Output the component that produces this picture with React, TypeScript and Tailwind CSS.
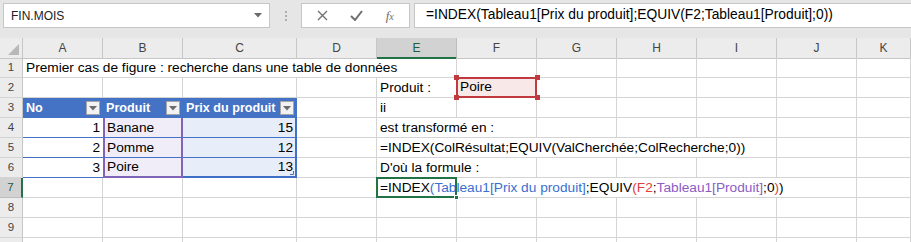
import React from "react";

const LETTERS = ["A", "B", "C", "D", "E", "F", "G", "H", "I", "J", "K"];
const GRID =
  "grid grid-cols-[23px_80px_80px_114px_80px_80px_80px_80px_80px_80px_80px_1fr]";

const FORMULA = "=INDEX(Tableau1[Prix du produit];EQUIV(F2;Tableau1[Produit];0))";

function FilterButton() {
  return (
    <span className="ml-auto mr-[3px] mb-[2px] flex h-[14px] w-[14px] shrink-0 items-center justify-center border border-[#a6a6a6] bg-[#f2f2f2]">
      <svg width="8" height="5" viewBox="0 0 8 5">
        <path d="M0 0h8L4 4.5z" fill="#6b6b6b" />
      </svg>
    </span>
  );
}

function RowHead({ n, active }: { n?: number; active?: boolean }) {
  return (
    <div
      className={
        "flex h-[20px] items-center justify-center border-b text-[11.5px] " +
        (active
          ? "border-b-[#bdbdbd] border-r-2 border-r-[#217346] bg-[#d2d2d2] text-[#1e5e3a]"
          : "border-b-[#d4d4d4] border-r border-r-[#c6c6c6] bg-[#ececec] text-[#444]")
      }
    >
      {n}
    </div>
  );
}

function Cell({
  className = "",
  children,
}: {
  className?: string;
  children?: React.ReactNode;
}) {
  return (
    <div
      className={
        "flex h-[20px] items-end overflow-visible whitespace-nowrap px-[3px] pb-[1px] leading-[17px] " +
        className
      }
    >
      {children}
    </div>
  );
}

const plain = "border-r border-b border-[#d4d4d4]";

function Blank({ count }: { count: number }) {
  return (
    <>
      {Array.from({ length: count }).map((_, i) => (
        <Cell key={i} className={plain} />
      ))}
    </>
  );
}

function Handle({ className }: { className: string }) {
  return <span className={"absolute h-[5px] w-[5px] " + className} />;
}

export default function App() {
  return (
    <div
      className="h-[242px] w-[911px] overflow-hidden bg-white text-[13.7px] text-black"
      style={{ fontFamily: '"Liberation Sans", Arial, sans-serif' }}
    >
      {/* formula bar */}
      <div className="flex h-[38px] items-start bg-[#e6e6e6] pt-[3px]">
        <div className="ml-[3px] flex h-[25px] w-[267px] items-center border border-[#c6c6c6] bg-white pl-[7px] pr-[7px] text-[12px] text-[#222]">
          <span>FIN.MOIS</span>
          <svg className="ml-auto" width="8" height="5" viewBox="0 0 8 5">
            <path d="M0 0h8L4 4.5z" fill="#6b6b6b" />
          </svg>
        </div>
        <div className="flex h-[25px] w-[31px] flex-col items-center justify-center gap-[2px]">
          <span className="h-[2px] w-[2px] bg-[#b0b0b0]" />
          <span className="h-[2px] w-[2px] bg-[#b0b0b0]" />
          <span className="h-[2px] w-[2px] bg-[#b0b0b0]" />
        </div>
        <div className="flex h-[25px] w-[109px] items-center justify-around border border-[#c6c6c6] bg-white px-[4px]">
          <svg width="11" height="11" viewBox="0 0 11 11">
            <path d="M1 1l9 9M10 1l-9 9" stroke="#6e6e6e" strokeWidth="1.3" />
          </svg>
          <svg width="13" height="11" viewBox="0 0 13 11">
            <path d="M1 6l4 4 7-9" stroke="#6e6e6e" strokeWidth="2" fill="none" />
          </svg>
          <span
            className="text-[13px] italic text-[#6e6e6e]"
            style={{ fontFamily: '"Liberation Serif", serif' }}
          >
            f<span className="text-[10px]">x</span>
          </span>
        </div>
        <div className="ml-[4px] flex h-[25px] flex-1 items-center border border-r-0 border-[#c6c6c6] bg-white pl-[11px] text-[13.8px]">
          {FORMULA}
        </div>
      </div>

      {/* column headers */}
      <div className={GRID + " h-[20px]"}>
        <div className="relative border-r border-b border-[#c6c6c6] bg-[#ececec]">
          <svg className="absolute bottom-[3px] right-[3px]" width="11" height="11" viewBox="0 0 11 11">
            <path d="M11 0v11H0z" fill="#b8b8b8" />
          </svg>
        </div>
        {LETTERS.map((l) =>
          l === "E" ? (
            <div
              key={l}
              className="flex items-center justify-center border-r border-r-[#bdbdbd] border-b-2 border-b-[#217346] bg-[#d2d2d2] pt-[1px] text-[12px] text-[#1e5e3a]"
            >
              {l}
            </div>
          ) : (
            <div
              key={l}
              className="flex items-center justify-center border-r border-b border-[#c6c6c6] bg-[#ececec] text-[12px] text-[#444]"
            >
              {l}
            </div>
          )
        )}
      </div>

      {/* row 1 */}
      <div className={GRID}>
        <RowHead n={1} />
        <Cell className={plain + " col-span-5"}>
          Premier cas de figure : recherche dans une table de données
        </Cell>
        <Blank count={6} />
      </div>

      {/* row 2 */}
      <div className={GRID}>
        <RowHead n={2} />
        <Blank count={4} />
        <Cell className={plain}>Produit :</Cell>
        <div className="relative h-[20px] border-b border-[#d4d4d4]">
          <div className="absolute -left-[1px] -top-[1px] flex h-[21px] w-[81px] items-end border-2 border-[#c0393f] bg-[#f9e8e8] px-[2px] pb-[1px] leading-[17px]">
            Poire
          </div>
          <Handle className="-left-[3px] -top-[3px] bg-[#c0393f]" />
          <Handle className="-right-[3px] -top-[3px] bg-[#c0393f]" />
          <Handle className="-left-[3px] -bottom-[3px] bg-[#c0393f]" />
          <Handle className="-right-[3px] -bottom-[3px] bg-[#c0393f]" />
        </div>
        <Blank count={5} />
      </div>

      {/* row 3 : table header */}
      <div className={GRID}>
        <RowHead n={3} />
        <Cell className="bg-[#4472c4] pr-0 text-[12.6px] font-bold text-white">
          No
          <FilterButton />
        </Cell>
        <Cell className="bg-[#4472c4] pr-0 text-[12.6px] font-bold text-white">
          Produit
          <FilterButton />
        </Cell>
        <Cell className="bg-[#4472c4] pr-0 text-[12.6px] font-bold text-white">
          Prix du produit
          <FilterButton />
        </Cell>
        <Blank count={1} />
        <Cell className={plain}>ii</Cell>
        <Blank count={6} />
      </div>

      {/* rows 4-6 : table body */}
      {[
        { n: 1, fruit: "Banane", price: 15, extra: "est transformé en :", span: "col-span-2" },
        {
          n: 2,
          fruit: "Pomme",
          price: 12,
          extra: "=INDEX(ColRésultat;EQUIV(ValCherchée;ColRecherche;0))",
          span: "col-span-5",
        },
        { n: 3, fruit: "Poire", price: 13, extra: "D'où la formule :", span: "col-span-2" },
      ].map((r, i) => {
        const last = i === 2;
        return (
          <div key={r.n} className={GRID}>
            <RowHead n={r.n + 3} />
            <Cell className="justify-end border-b border-b-[#4472c4]">{r.n}</Cell>
            <Cell
              className={
                "border-x-2 border-x-[#8064b8] bg-[#f1edf8] pl-[2px] " +
                (last ? "border-b-2 border-b-[#8064b8]" : "border-b border-b-[#4472c4]")
              }
            >
              {r.fruit}
            </Cell>
            <div
              className={
                "relative flex h-[20px] items-end justify-end border-r-2 border-r-[#3f6fc6] bg-[#e8eef9] pb-[1px] pr-[2px] leading-[17px] " +
                (last ? "border-b-2 border-b-[#3f6fc6]" : "border-b border-b-[#4472c4]")
              }
            >
              {r.price}
              {last && (
                <svg className="absolute bottom-[1px] right-[1px]" width="4" height="4" viewBox="0 0 4 4">
                  <path d="M3.5 0v3.5H0" stroke="#3f6fc6" fill="none" />
                </svg>
              )}
            </div>
            <Blank count={1} />
            <Cell className={plain + " " + r.span}>{r.extra}</Cell>
            <Blank count={r.span === "col-span-5" ? 2 : 5} />
          </div>
        );
      })}

      {/* row 7 : active cell */}
      <div className={GRID}>
        <RowHead n={7} active />
        <Blank count={4} />
        <div className="relative col-span-6 h-[20px] border-r border-b border-[#d4d4d4]">
          <div className="absolute -left-[1px] -top-[1px] h-[21px] w-[81px] border-2 border-[#217346]" />
          <span className="absolute -bottom-[3px] left-[77px] h-[5px] w-[5px] border border-white bg-[#217346]" />
          <div className="flex h-full items-end whitespace-nowrap px-[3px] pb-[1px] leading-[17px]">
            <span>=INDEX</span>
            <span className="text-[#3a6fd0]">(Tableau1[Prix du produit]</span>
            <span>;EQUIV</span>
            <span className="text-[#e0403a]">(F2</span>
            <span>;</span>
            <span className="text-[#8b5cc4]">Tableau1[Produit]</span>
            <span>;0</span>
            <span className="text-[#e0403a]">)</span>
            <span>)</span>
          </div>
        </div>
        <Blank count={1} />
      </div>

      {/* rows 8-10 */}
      {[8, 9].map((n) => (
        <div key={n} className={GRID}>
          <RowHead n={n} />
          <Blank count={11} />
        </div>
      ))}
      <div className={GRID}>
        <RowHead />
        <Blank count={11} />
      </div>
    </div>
  );
}
